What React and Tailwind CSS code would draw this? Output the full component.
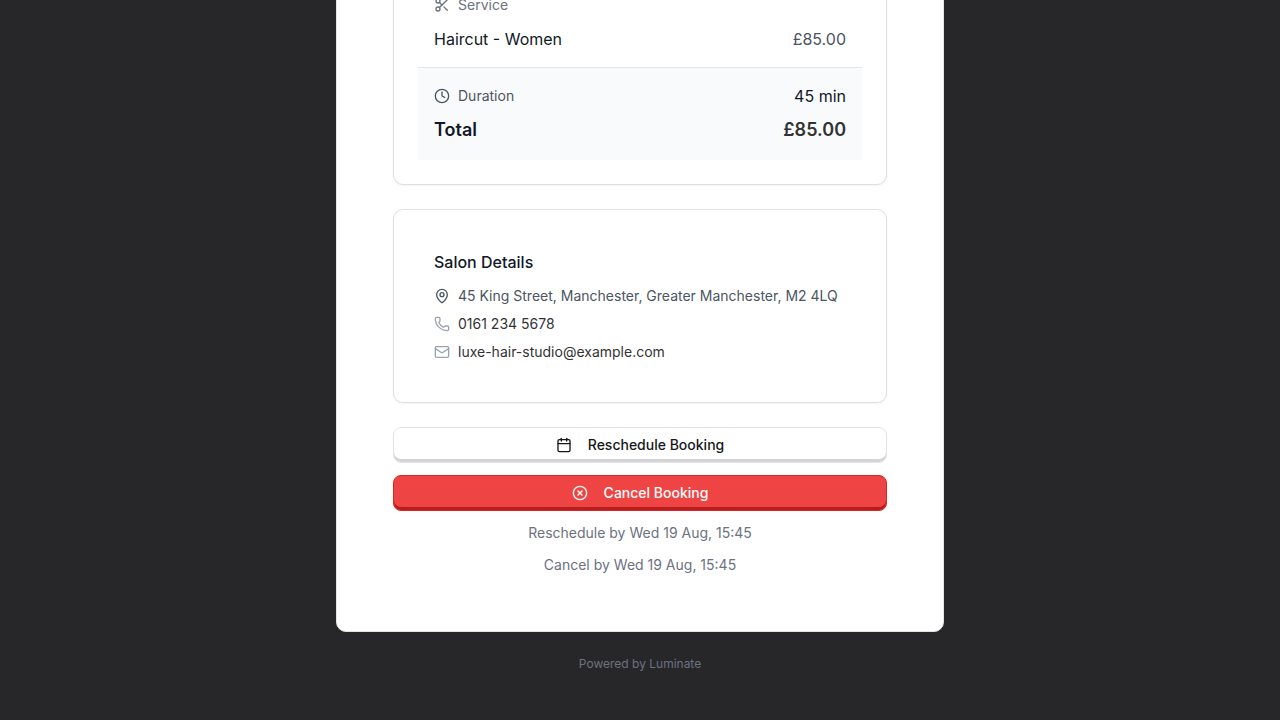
import { Calendar, CircleX, Clock, Mail, MapPin, Phone, Scissors } from "lucide-react";

const services = [{ name: "Haircut - Women", price: "£85.00" }];

const salon = {
  address: "45 King Street, Manchester, Greater Manchester, M2 4LQ",
  phone: "0161 234 5678",
  email: "luxe-hair-studio@example.com",
};

function Card({ children }) {
  return (
    <section className="rounded-[10px] border border-[#e0e0e2] bg-white p-6 shadow-xs">{children}</section>
  );
}

function BookingSummary() {
  return (
    <Card>
      <div className="px-4 pt-4 pb-4">
        <h2 className="mb-3 flex items-center gap-2 text-sm text-[#6b7280]">
          <Scissors className="h-4 w-4" /> Service
        </h2>
        {services.map((s) => (
          <div key={s.name} className="flex justify-between text-base">
            <span className="text-[#111827]">{s.name}</span>
            <span className="text-[#4b5563]">{s.price}</span>
          </div>
        ))}
      </div>

      {/* Totals */}
      <dl className="space-y-2 border-t border-[#e4e4e7] bg-[#f9fafb] p-4">
        <div className="flex items-center justify-between">
          <dt className="flex items-center gap-2 text-sm text-[#4b5563]">
            <Clock className="h-4 w-4" /> Duration
          </dt>
          <dd className="text-base text-[#111827]">45 min</dd>
        </div>
        <div className="flex items-center justify-between text-lg font-semibold">
          <dt className="text-[#111827]">Total</dt>
          <dd className="text-[#333333]">£85.00</dd>
        </div>
      </dl>
    </Card>
  );
}

function SalonDetails() {
  return (
    <Card>
      <div className="p-4">
        <h2 className="mb-3 text-base font-medium text-[#111827]">Salon Details</h2>
        <div className="space-y-2 text-sm">
          <p className="flex items-center gap-2 text-[#4b5563]">
            <MapPin className="h-4 w-4 shrink-0" /> {salon.address}
          </p>
          <p className="flex items-center gap-2">
            <Phone className="h-4 w-4 shrink-0 text-[#9ca3af]" />
            <a href="tel:01612345678" className="text-[#333333]">{salon.phone}</a>
          </p>
          <p className="flex items-center gap-2">
            <Mail className="h-4 w-4 shrink-0 text-[#9ca3af]" />
            <a href="mailto:luxe-hair-studio@example.com" className="text-[#333333]">{salon.email}</a>
          </p>
        </div>
      </div>
    </Card>
  );
}

export default function App() {
  return (
    // Reversed column keeps the scroll position at the end of the booking
    <div className="flex h-screen flex-col-reverse overflow-y-auto bg-[#27272a] font-['Inter',sans-serif] antialiased [scrollbar-width:none]">
      <div className="mx-auto w-full max-w-2xl px-8 pb-12">
        <main className="space-y-6 rounded-[10px] border border-[#e4e4e7] bg-white p-14">
          <BookingSummary />
          <SalonDetails />

          {/* Actions */}
          <div className="space-y-3 text-center text-sm">
            <button
              type="button"
              className="flex h-9 w-full items-center justify-center gap-4 rounded-lg border border-[#e4e4e7] bg-white font-medium text-[#18181b] shadow-[inset_0_-3px_0_0_#d4d4d8]"
            >
              <Calendar className="h-4 w-4" /> Reschedule Booking
            </button>
            <button
              type="button"
              className="flex h-9 w-full items-center justify-center gap-4 rounded-lg border border-[#dc2626] bg-[#ef4444] font-medium text-white shadow-[inset_0_-3px_0_0_#b91c1c]"
            >
              <CircleX className="h-4 w-4" /> Cancel Booking
            </button>
            <p className="text-[#6b7280]">Reschedule by Wed 19 Aug, 15:45</p>
            <p className="text-[#6b7280]">Cancel by Wed 19 Aug, 15:45</p>
          </div>
        </main>
        <footer className="mt-6 text-center text-xs text-[#6b7280]">Powered by Luminate</footer>
      </div>
    </div>
  );
}
